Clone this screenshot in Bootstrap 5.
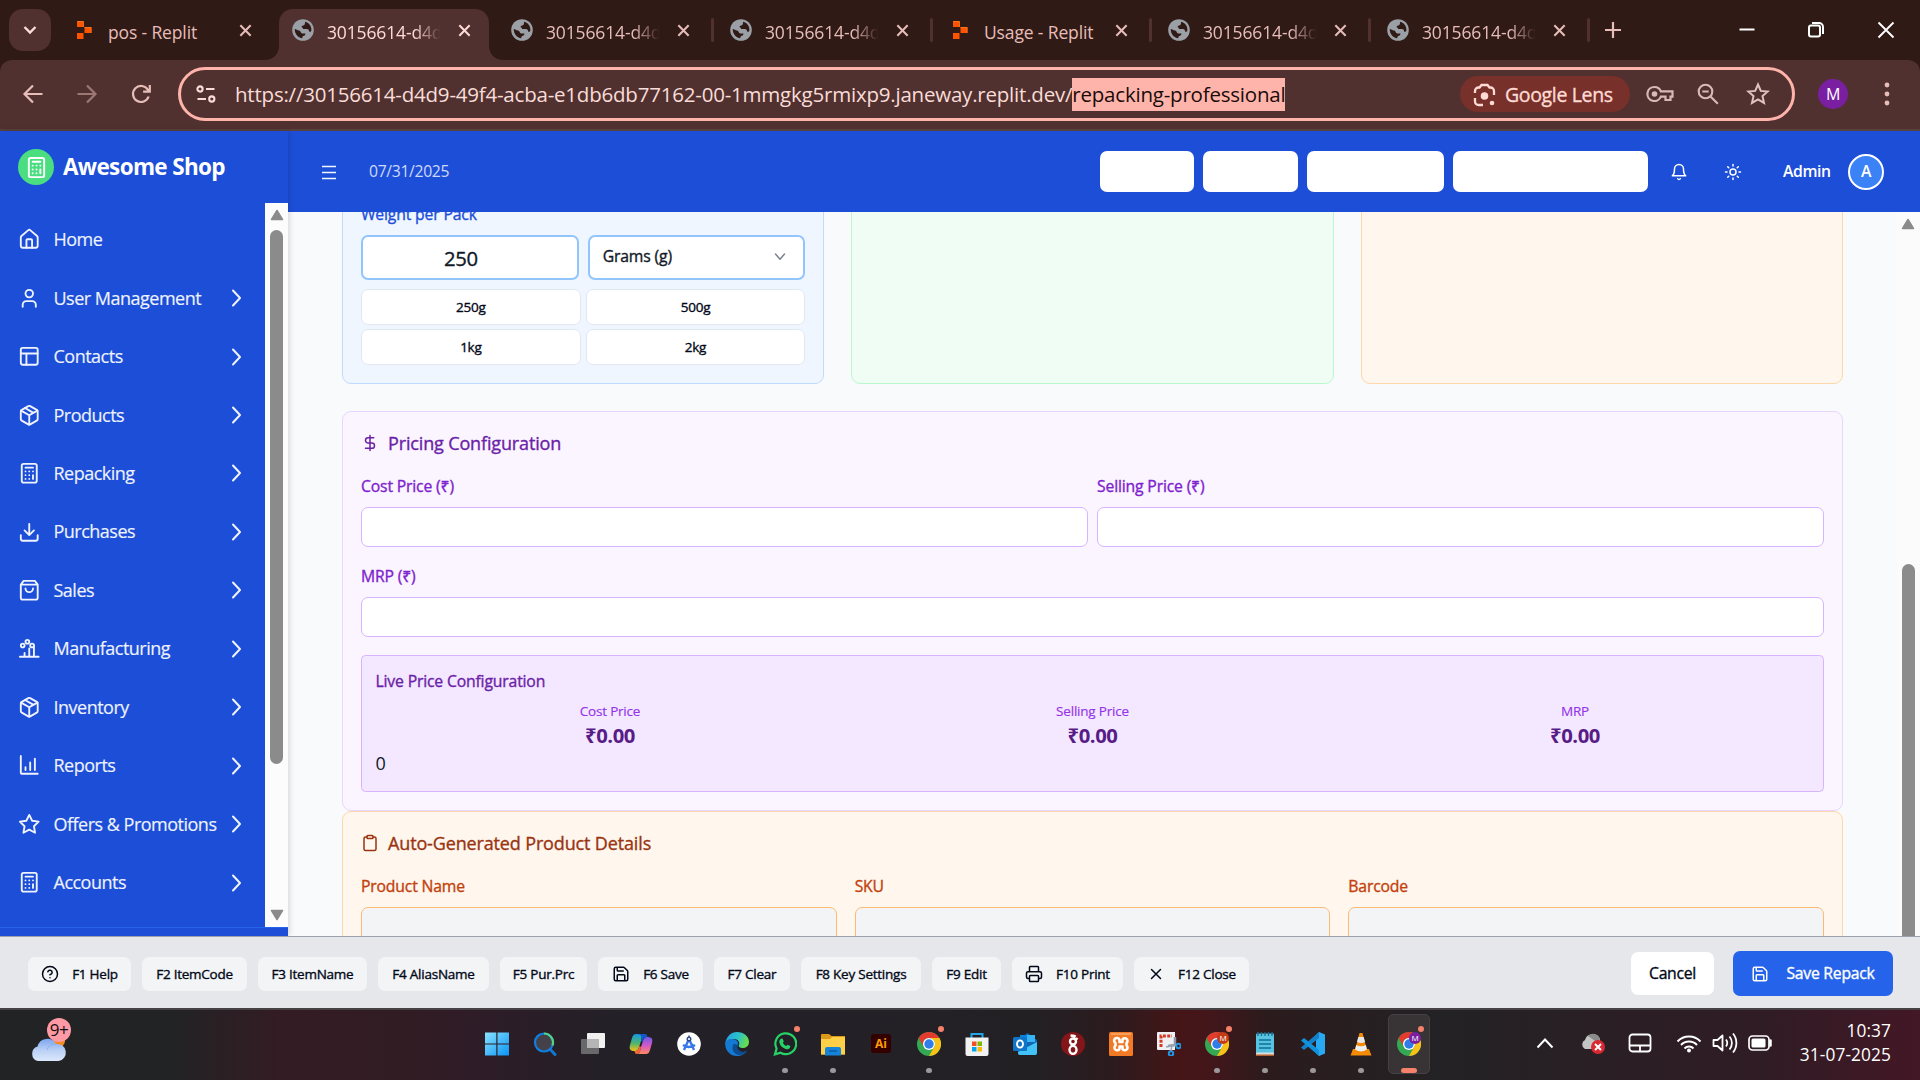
<!DOCTYPE html>
<html lang="en">
<head>
<meta charset="utf-8">
<meta name="viewport" content="width=device-width, initial-scale=1">
<title>Awesome Shop - Repacking</title>
<link rel="stylesheet" href="https://cdn.jsdelivr.net/npm/bootstrap@5.3.0/dist/css/bootstrap.min.css">
<style>
  body{width:1920px;height:1080px;overflow:hidden;font-family:"Open Sans","Noto Sans",sans-serif;font-size:18px;line-height:1.5;letter-spacing:-.02em;color:#111827;background:#f9fafb}
  svg{display:block;flex:none}
  .ln{fill:none;stroke:currentColor;stroke-width:2;stroke-linecap:round;stroke-linejoin:round}
  .fw-md,.lbl,.qbtn,.sect,.fk,.cancel,.saver,.lens{-webkit-text-stroke:.35px currentColor}
  /* browser chrome */
  .tabstrip{height:60px;background:#301a16;padding-left:9px;color:#e7bdb8}
  .tabsearch{width:42px;height:42px;border-radius:14px;background:#50312f;margin:9px 4.5px 0 0;color:#fadcd8}
  .tab-item{width:219px;height:51px;padding:0 0 0 17.5px;margin-top:9px;position:relative;font-size:17.5px}
  .tab-item .fav{width:22px;height:22px;margin-right:13px;margin-bottom:10px}
  .tab-item .ttl{width:121px;white-space:nowrap;margin-bottom:5px;letter-spacing:-.008em}
  .tab-item .fade-end{-webkit-mask-image:linear-gradient(90deg,#000 72%,transparent 94%);mask-image:linear-gradient(90deg,#000 72%,transparent 94%)}
  .tab-item .x{margin:0 0 9px 9px}
  .tab-item.sep::after{content:"";position:absolute;right:-1px;top:9px;width:3px;height:24px;border-radius:2px;background:#50312f}
  .tab-item.on{color:#ffdad5}
  .tab-item.on::before{content:"";position:absolute;z-index:0;left:4.5px;right:4.5px;top:0;bottom:0;background:#50312f;border-radius:14px 14px 0 0}
  .tab-item.on>*{position:relative;z-index:1}
  .tab-item .flare{position:absolute!important;bottom:0;width:13px;height:13px}
  .flare.l{left:-8.5px;background:radial-gradient(circle at 0 0,transparent 12.5px,#50312f 13px)}
  .flare.r{right:-8.5px;background:radial-gradient(circle at 100% 0,transparent 12.5px,#50312f 13px)}
  .newtab{margin-left:15px}
  .winctl{color:#fff;gap:48.5px;padding-right:24.5px}
  .corner{background:#301a16}
  .toolbar{height:71px;background:#50312f;border-bottom:2px solid #5b413e;border-radius:12px 12px 0 0;color:#e7bdb8;padding:7px 25px 0 22px}
  .navs{height:54px;gap:32px}
  .omni{width:1617px;height:54px;border:3px solid #ffb4ab;border-radius:27px;padding:0 22px 0 15px;color:#fadcd8}
  .url{font-size:20.5px;letter-spacing:-.0103em;white-space:nowrap;margin-left:19px;line-height:33px}
  .url .sel{background:#ffb4ab;color:#1a0b09;display:inline-block;height:33px}
  .lens{width:170px;height:36px;border-radius:18px;background:#77302a;color:#ffdad5;font-size:19.5px;letter-spacing:-.018em;padding:1px 0 0 13px;gap:9px}
  .gap-l{margin-left:23px}
  .prof{width:30px;height:30px;border-radius:50%;background:#7b1fa2;color:#fff;font-size:16px}
  .profwrap{height:54px;margin-left:23px}
  .dots{margin:0 5px 0 36px}
  /* application */
  .app{height:805px}
  .side{width:288px;background:#1d4ed8;color:#fff;box-shadow:1px 0 6px rgba(0,0,0,.16);position:relative;z-index:2}
  .brand{height:72px;padding:0 0 0 18px;font-size:22.5px;font-weight:700;letter-spacing:-.029em;gap:9px}
  .brand .logo{width:36px;height:36px;border-radius:50%;background:#4ade80}
  .menu{height:724px}
  .menu ul{width:265px;padding:7.5px 16px 0 18px;color:#eef3fd}
  .menu li{height:58.45px}
  .menu li .tx{width:170px;white-space:nowrap;margin-left:13px;letter-spacing:-.028em;-webkit-text-stroke:.15px currentColor}
  .track{width:23px;background:#fcfcfc;padding:6px 0}
  .thumb{width:13px;background:#8b8b8b}
  .side-thumb{height:534px;margin-top:9px}
  .main-thumb{margin-top:334px;border-radius:7px 7px 0 0}
  .side-foot{height:9px;border-top:1px solid #2563eb}
  .hdr{height:81px;background:#1d4ed8;color:#fff;padding:0 36px 0 33px}
  .hdr .date{font-size:15.75px;color:#cddafb;margin-left:32px;letter-spacing:-.022em}
  .blanks{gap:9px}
  .blank{height:41px;background:#fff;border-radius:7px}
  .blank:nth-child(1){width:94px}.blank:nth-child(2){width:95px}.blank:nth-child(3){width:137px}.blank:nth-child(4){width:195px}
  .bell{margin-left:22px}.sun{margin-left:36px}
  .admin{font-size:15.75px;font-weight:600;margin-left:41px;width:65px;letter-spacing:-.025em}
  .usr{width:36px;height:36px;border-radius:50%;background:#3b82f6;border:2px solid #fff;font-size:15.75px;font-weight:600}
  .content{height:724px;background:#f9fafb;overflow:hidden}
  .pane{width:1609px;padding:0 54px}
  .three{display:grid;grid-template-columns:repeat(3,1fr);gap:27px;height:200px;margin-top:-28px;margin-bottom:27px}
  .panel{border:1px solid;border-radius:9px;padding:0 18px}
  .p-blue{background:#eff6ff;border-color:#bfdbfe}.p-green{background:#f0fdf4;border-color:#bbf7d0}
  .p-org{background:#fff7ed;border-color:#fed7aa}.p-pur{background:#faf5ff;border-color:#e9d5ff}
  .lbl{font-size:15.75px;line-height:22px;letter-spacing:-.011em}
  .p-blue .lbl{color:#1d4ed8;margin-top:18px}
  .p-pur .lbl{color:#7e22ce}.p-org .lbl{color:#c2410c}
  .p-pur .lbl.dark{color:#6b21a8}
  .fld{border:1px solid #d8b4fe;border-radius:7px;background:#fff;height:40px;margin-top:10px}
  .fld-b{height:45px;border:2px solid #93c5fd;border-radius:7px;background:#fff}
  .num-in{font-size:20.25px;line-height:43px;padding-right:18px}
  .unit-in{font-size:15.75px;padding:0 14px 2px 13px;letter-spacing:-.01em}
  .unit-in svg{color:#7b8190}
  .qty{display:grid;grid-template-columns:1fr 1fr;gap:9px;margin-top:10px}
  .qty2{display:grid;grid-template-columns:1fr 1fr;gap:4px 5px;margin-top:9px}
  .qbtn{height:36px;border:1px solid #e2e8f0;border-radius:7px;background:#fff;font-size:13.5px;line-height:35px;padding:0;color:#020817;letter-spacing:-.02em}
  .sect{font-size:18px;line-height:28px;letter-spacing:-.008em;gap:9px;margin-bottom:18px}
  .pricing{height:400px;padding-top:17px}
  .pair{gap:9px}
  .pair>div{flex:1 1 0}
  .mrp{margin-top:18px}
  .live{height:137px;background:#f3e8ff;border:1px solid #d8b4fe;border-radius:4.5px;margin-top:18px;padding:14px 13.5px}
  .live .cap{font-size:13.5px;line-height:18px;color:#9333ea;letter-spacing:-.015em;-webkit-text-stroke:.15px currentColor}
  .live .amt{font-size:20.25px;line-height:30px;font-weight:700;color:#581c87;letter-spacing:-.02em}
  .prices{display:grid;grid-template-columns:repeat(3,1fr);gap:13.5px;margin-top:10px}
  .p-org.auto{height:160px;padding-top:17px}
  .auto3{display:grid;grid-template-columns:repeat(3,1fr);gap:18px}
  .auto .fld{background:#f3f4f6;border-color:#fdba74}
  .track2{width:22px;padding:6px 0 0;background:#fbfbfc}
  .c-pur{color:#6b21a8}.c-org{color:#9a3412}
  /* shortcut bar */
  .fbar{height:72px;background:#e5e7eb;border-top:1px solid #9ca3af;padding:2px 27px 0 28px;position:relative;z-index:3}
  .fkeys{gap:11px}
  .fk{height:34px;border:0;border-radius:7px;background:#f3f4f6;color:#020817;font-size:13.5px;padding:1px 0 0;letter-spacing:-.018em;white-space:nowrap;gap:13px}
  .fk:nth-child(1){width:103px}.fk:nth-child(2){width:105px}.fk:nth-child(3){width:109px}.fk:nth-child(4){width:111px}.fk:nth-child(5){width:87px}.fk:nth-child(6){width:105px}.fk:nth-child(7){width:76px}.fk:nth-child(8){width:120px}.fk:nth-child(9){width:69px}.fk:nth-child(10){width:111px}.fk:nth-child(11){width:115px}
  .cancel{width:83px;height:43px;background:#fff;border-radius:7px;font-size:15.75px;color:#020817;padding:0;margin-right:19px;letter-spacing:-.018em}
  .saver{width:160px;height:45px;background:#2563eb;border-radius:7px;font-size:15.75px;color:#fff;padding:0;gap:17px;letter-spacing:-.016em}
  .cancel:hover,.saver:hover,.fk:hover{opacity:.9}
  /* windows taskbar */
  .task{height:72px;border-top:2px solid #454144;color:#fff;background:linear-gradient(90deg,#222324 0,#222324 9%,#331c24 14.5%,#321c23 21%,#2f1c27 24%,#232028 32%,#232126 48%,#232024 54%,#2c1b1e 58%,#451517 61.5%,#43161a 63%,#2b1b1d 66%,#232224 75%,#2a1f24 84%,#301c24 92%,#431726 100%)}
  .weather{width:80px;padding-left:29px;position:relative}
  .weather svg{margin-top:23px}
  .weather .num{position:absolute;left:47px;top:8px;width:24px;height:24px;border-radius:50%;background:#ff99a4;color:#101010;font-size:17px;line-height:23px;text-align:center;letter-spacing:-.03em}
  .apps{padding-left:393.3px}
  .app-ico{width:48px;height:70px;padding-bottom:2px;position:relative}
  .app-ico.run::after{content:"";position:absolute;left:21px;bottom:7px;width:6px;height:5px;border-radius:3px;background:#9b989a}
  .app-ico.alert-dot::before{content:"";position:absolute;z-index:2;left:33px;top:16px;width:6px;height:6px;border-radius:50%;background:#f4826b}
  .app-ico.cur svg{position:relative;z-index:1}
  .app-ico .hl{position:absolute;left:3px;top:4px;width:42px;height:60px;border-radius:5px;background:#383335;border:1px solid #454043}
  .app-ico.cur::after{left:16px;width:16px;background:#f4826b;z-index:2}
  .tray{padding-right:29px}
  .tray .cloudy{margin-left:26px}.tray .pad{margin-left:22px}.tray .wifi{margin-left:24px}.tray .spk{margin-left:10px}
  .clock{font-size:17.3px;line-height:24px;width:106px;text-align:right;letter-spacing:.006em;margin-left:12px}
</style>
<script src="https://cdn.jsdelivr.net/npm/bootstrap@5.3.0/dist/js/bootstrap.bundle.min.js"></script>
</head>
<body class="d-flex flex-column">
<svg width="0" height="0" class="position-absolute">
  <defs>
    <symbol id="cls" viewBox="0 0 16 16"><path d="M2.500 2.500l11 11M13.500 2.500l-11 11" fill="none" stroke="currentColor" stroke-width="2.200"/></symbol>
    <symbol id="globe" viewBox="0 0 22 22"><circle cx="11" cy="11" r="10.800" fill="#9aa0a6"/><path d="M13.200 2.800c-.6 1.600.3 2.100-1 3.100-1.200.8-2.400.4-2.600 1.700-.2 1.100 1.400 1.100 1.500 2.300h3.700c1.500 0 2.500 1.200 2.300 2.800 1.300.3 2-.2 2.300-1.200.3-4.300-2.300-7.600-6.200-8.700zM2.700 10c0 5 3.200 8.800 7.700 9.300-.4-1.200.3-2.300 1.500-2.600 1-.3 1.500-.8 1.500-2.200h-3c-2 0-1.400-2.600-3.400-2.900C5.200 11.300 4.400 10.200 2.700 10z" fill="#301a16"/></symbol>
    <symbol id="repl" viewBox="0 0 22 22"><path d="M4 2h6.500v6H4zM11.500 8h7v6h-7zM4 14h6.500v6H4z" fill="#fd5402"/><path d="M4.500 2.500h6V8M11.500 8.500h6.500V14" fill="none" stroke="#ff7a1e" stroke-width=".8"/></symbol>
    <symbol id="chev" viewBox="0 0 24 24"><path class="ln" d="M9 4.500l7 7.500-7 7.500"/></symbol>
    <symbol id="home" viewBox="0 0 24 24"><g class="ln"><path d="M3 10a2 2 0 0 1 .7-1.500l7-6a2 2 0 0 1 2.600 0l7 6A2 2 0 0 1 21 10v9a2 2 0 0 1-2 2H5a2 2 0 0 1-2-2z"/><path d="M15 21v-8a1 1 0 0 0-1-1h-4a1 1 0 0 0-1 1v8"/></g></symbol>
    <symbol id="user" viewBox="0 0 24 24"><g class="ln"><path d="M19 21v-2a4 4 0 0 0-4-4H9a4 4 0 0 0-4 4v2"/><circle cx="12" cy="7" r="4"/></g></symbol>
    <symbol id="layout" viewBox="0 0 24 24"><g class="ln"><rect x="3" y="3" width="18" height="18" rx="2"/><path d="M3 9h18M9 21V9"/></g></symbol>
    <symbol id="pkg" viewBox="0 0 24 24"><g class="ln"><path d="M21 8a2 2 0 0 0-1-1.730l-7-4a2 2 0 0 0-2 0l-7 4A2 2 0 0 0 3 8v8a2 2 0 0 0 1 1.730l7 4a2 2 0 0 0 2 0l7-4A2 2 0 0 0 21 16z"/><path d="M3.300 7L12 12l8.700-5M12 22V12M7.500 4.270l9 5.150"/></g></symbol>
    <symbol id="calc" viewBox="0 0 24 24"><g class="ln"><rect x="4" y="2" width="16" height="20" rx="2"/><path d="M8 6h8M16 14v4M16 10h.01M12 10h.01M8 10h.01M12 14h.01M8 14h.01M12 18h.01M8 18h.01"/></g></symbol>
    <symbol id="down" viewBox="0 0 24 24"><path class="ln" d="M21 15v4a2 2 0 0 1-2 2H5a2 2 0 0 1-2-2v-4M7 10l5 5 5-5M12 15V3"/></symbol>
    <symbol id="bag" viewBox="0 0 24 24"><path class="ln" d="M6 2L3 6v14a2 2 0 0 0 2 2h14a2 2 0 0 0 2-2V6l-3-4zM3 6h18M16 10a4 4 0 0 1-8 0"/></symbol>
    <symbol id="manu" viewBox="0 0 24 24"><g class="ln"><circle cx="5" cy="8" r="2"/><circle cx="10" cy="4" r="2"/><circle cx="15" cy="8" r="2"/><path d="M2 20h20M7 20v-4M12 20v-9M17 8.500V20"/></g></symbol>
    <symbol id="chart" viewBox="0 0 24 24"><path class="ln" d="M3 2v18a1 1 0 0 0 1 1h17M8 17v-3M13 17V9M18 17V5"/></symbol>
    <symbol id="star" viewBox="0 0 24 24"><path class="ln" d="M12 2l3.090 6.260L22 9.270l-5 4.870 1.180 6.880L12 17.770l-6.180 3.250L7 14.140 2 9.270l6.910-1.010z"/></symbol>
    <symbol id="save" viewBox="0 0 24 24"><path class="ln" d="M15.200 3a2 2 0 0 1 1.400.6l3.800 3.800a2 2 0 0 1 .6 1.400V19a2 2 0 0 1-2 2H5a2 2 0 0 1-2-2V5a2 2 0 0 1 2-2zM17 21v-7a1 1 0 0 0-1-1H8a1 1 0 0 0-1 1v7M7 3v4a1 1 0 0 0 1 1h7"/></symbol>
    <symbol id="up" viewBox="0 0 14 12"><path d="M7 1.500L12.500 10.500H1.500z" fill="#8b8b8b" stroke="#8b8b8b" stroke-width="1.500" stroke-linejoin="round"/></symbol>
    <symbol id="chrome" viewBox="0 0 24 24"><circle cx="12" cy="12" r="12" fill="#34a853"/><path d="M12 0a12 12 0 0 1 10.400 6H12a6 6 0 0 0-5.200 9L1.600 6A12 12 0 0 1 12 0z" fill="#e33b2e"/><path d="M22.400 6A12 12 0 0 1 12 24l5.200-9A6 6 0 0 0 17.200 9 6 6 0 0 0 12 6z" fill="#fbc116"/><circle cx="12" cy="12" r="6" fill="#fff"/><circle cx="12" cy="12" r="4.700" fill="#2f7de9"/></symbol>
  </defs>
</svg>

<div class="tabstrip d-flex">
  <div class="tabsearch d-flex align-items-center justify-content-center"><svg width="14" height="10" viewBox="0 0 14 10"><path d="M1.500 2l5.500 5.500L12.500 2" fill="none" stroke="currentColor" stroke-width="2.400"/></svg></div>
  <div class="tab-item d-flex align-items-center"><svg class="fav"><use href="#repl"/></svg><span class="ttl">pos - Replit</span><svg class="x" width="15" height="15"><use href="#cls"/></svg></div>
  <div class="tab-item on d-flex align-items-center"><i class="flare l"></i><i class="flare r"></i><svg class="fav"><use href="#globe"/></svg><span class="ttl fade-end">30156614-d4d</span><svg class="x" width="15" height="15"><use href="#cls"/></svg></div>
  <div class="tab-item sep d-flex align-items-center"><svg class="fav"><use href="#globe"/></svg><span class="ttl fade-end">30156614-d4d</span><svg class="x" width="15" height="15"><use href="#cls"/></svg></div>
  <div class="tab-item sep d-flex align-items-center"><svg class="fav"><use href="#globe"/></svg><span class="ttl fade-end">30156614-d4d</span><svg class="x" width="15" height="15"><use href="#cls"/></svg></div>
  <div class="tab-item sep d-flex align-items-center"><svg class="fav"><use href="#repl"/></svg><span class="ttl">Usage - Replit</span><svg class="x" width="15" height="15"><use href="#cls"/></svg></div>
  <div class="tab-item sep d-flex align-items-center"><svg class="fav"><use href="#globe"/></svg><span class="ttl fade-end">30156614-d4d</span><svg class="x" width="15" height="15"><use href="#cls"/></svg></div>
  <div class="tab-item sep d-flex align-items-center"><svg class="fav"><use href="#globe"/></svg><span class="ttl fade-end">30156614-d4d</span><svg class="x" width="15" height="15"><use href="#cls"/></svg></div>
  <svg class="newtab align-self-center" width="18" height="18" viewBox="0 0 18 18"><path d="M9 1v16M1 9h16" stroke="currentColor" stroke-width="2.200"/></svg>
  <div class="winctl d-flex align-items-center ms-auto">
    <svg width="20" height="20" viewBox="0 0 20 20"><path d="M2.500 9.500h15" stroke="currentColor" stroke-width="2"/></svg>
    <svg width="22" height="20" viewBox="0 0 22 20"><g fill="none" stroke="currentColor" stroke-width="2"><rect x="4" y="5.500" width="11" height="11" rx="2"/><path d="M7 3h7a4 4 0 0 1 4 4v7"/></g></svg>
    <svg width="20" height="20" viewBox="0 0 20 20"><path d="M2.500 2.500l15 15M17.500 2.500l-15 15" stroke="currentColor" stroke-width="1.900"/></svg>
  </div>
</div>
<div class="corner">
<div class="toolbar d-flex align-items-start">
  <div class="navs d-flex align-items-center">
    <svg width="22" height="20" viewBox="0 0 22 20"><path d="M20.500 10H3M11 1.500L2.500 10l8.500 8.500" fill="none" stroke="currentColor" stroke-width="2.200"/></svg>
    <svg class="opacity-50" width="22" height="20" viewBox="0 0 22 20"><path d="M1.500 10H19M11 1.500l8.500 8.500-8.500 8.500" fill="none" stroke="currentColor" stroke-width="2.200"/></svg>
    <svg width="22" height="22" viewBox="0 0 22 22"><path d="M18.600 13.500a8 8 0 1 1-.8-6.800L19.500 8.500M19.800 2v6.700h-6.700" fill="none" stroke="currentColor" stroke-width="2.200"/></svg>
  </div>
  <div class="omni d-flex align-items-center ms-auto">
    <svg width="20" height="20" viewBox="0 0 20 20"><g fill="none" stroke="currentColor" stroke-width="2.100"><circle cx="4" cy="5" r="2.600"/><path d="M10 5h8.500M1.500 15H10"/><circle cx="15.800" cy="15" r="2.600"/></g></svg>
    <div class="url">https://30156614-d4d9-49f4-acba-e1db6db77162-00-1mmgkg5rmixp9.janeway.replit.dev/<span class="sel">repacking-professional</span></div>
    <div class="lens d-flex align-items-center ms-auto">
      <svg width="23" height="24" viewBox="0 0 23 24"><g fill="none" stroke="currentColor" stroke-width="2.300"><path d="M2 10V8a3.500 3.500 0 0 1 3.500-3.500h1L8.500 2h6l2 2.500h1A3.500 3.500 0 0 1 21 8v4M2 15v3.500A3.500 3.500 0 0 0 5.500 22H10"/></g><circle cx="11.500" cy="13" r="3.800" fill="currentColor"/><circle cx="19" cy="20" r="2.300" fill="currentColor"/></svg>
      <span>Google Lens</span></div>
    <svg class="ms-3" width="28" height="20" viewBox="0 0 28 20"><g fill="none" stroke="currentColor" stroke-width="2.200" opacity=".8"><path d="M8.500 3a7 7 0 1 0 6.400 9.700h4.600V16h5v-3.300h2V7.300H14.900A7 7 0 0 0 8.500 3z"/></g><circle cx="8.500" cy="10" r="2.800" fill="currentColor" opacity=".8"/></svg>
    <svg class="gap-l" width="22" height="22" viewBox="0 0 22 22"><g fill="none" stroke="currentColor" stroke-width="2.100" opacity=".8"><circle cx="8.500" cy="8.500" r="6.800"/><path d="M13.500 13.500l7.300 7.300M5.300 8.500h6.400"/></g></svg>
    <svg class="gap-l ps-1" width="28" height="24" viewBox="0 0 24 24"><path d="M12 2.500l2.800 6.400 6.900.6-5.200 4.600 1.500 6.800-6-3.600-6 3.600 1.500-6.800-5.200-4.600 6.900-.6z" fill="none" stroke="currentColor" stroke-width="2" opacity=".85"/></svg>
  </div>
  <div class="profwrap d-flex align-items-center">
    <div class="prof d-flex align-items-center justify-content-center">M</div>
    <svg class="dots" width="6" height="24" viewBox="0 0 6 24"><g fill="currentColor"><circle cx="3" cy="3" r="2.400"/><circle cx="3" cy="12" r="2.400"/><circle cx="3" cy="21" r="2.400"/></g></svg>
  </div>
</div>
</div>

<div class="app d-flex">
  <aside class="side d-flex flex-column">
    <div class="brand d-flex align-items-center"><div class="logo d-flex align-items-center justify-content-center"><svg width="23" height="23"><use href="#calc"/></svg></div><span>Awesome Shop</span></div>
    <nav class="menu d-flex">
      <ul class="list-unstyled m-0">
        <li class="d-flex align-items-center"><svg width="22.500" height="22.500"><use href="#home"/></svg><span class="tx">Home</span></li>
        <li class="d-flex align-items-center"><svg width="22.500" height="22.500"><use href="#user"/></svg><span class="tx">User Management</span><svg width="24" height="24"><use href="#chev"/></svg></li>
        <li class="d-flex align-items-center"><svg width="22.500" height="22.500"><use href="#layout"/></svg><span class="tx">Contacts</span><svg width="24" height="24"><use href="#chev"/></svg></li>
        <li class="d-flex align-items-center"><svg width="22.500" height="22.500"><use href="#pkg"/></svg><span class="tx">Products</span><svg width="24" height="24"><use href="#chev"/></svg></li>
        <li class="d-flex align-items-center"><svg width="22.500" height="22.500"><use href="#calc"/></svg><span class="tx">Repacking</span><svg width="24" height="24"><use href="#chev"/></svg></li>
        <li class="d-flex align-items-center"><svg width="22.500" height="22.500"><use href="#down"/></svg><span class="tx">Purchases</span><svg width="24" height="24"><use href="#chev"/></svg></li>
        <li class="d-flex align-items-center"><svg width="22.500" height="22.500"><use href="#bag"/></svg><span class="tx">Sales</span><svg width="24" height="24"><use href="#chev"/></svg></li>
        <li class="d-flex align-items-center"><svg width="22.500" height="22.500"><use href="#manu"/></svg><span class="tx">Manufacturing</span><svg width="24" height="24"><use href="#chev"/></svg></li>
        <li class="d-flex align-items-center"><svg width="22.500" height="22.500"><use href="#pkg"/></svg><span class="tx">Inventory</span><svg width="24" height="24"><use href="#chev"/></svg></li>
        <li class="d-flex align-items-center"><svg width="22.500" height="22.500"><use href="#chart"/></svg><span class="tx">Reports</span><svg width="24" height="24"><use href="#chev"/></svg></li>
        <li class="d-flex align-items-center"><svg width="22.500" height="22.500"><use href="#star"/></svg><span class="tx">Offers &amp; Promotions</span><svg width="24" height="24"><use href="#chev"/></svg></li>
        <li class="d-flex align-items-center"><svg width="22.500" height="22.500"><use href="#calc"/></svg><span class="tx">Accounts</span><svg width="24" height="24"><use href="#chev"/></svg></li>
      </ul>
      <div class="track d-flex flex-column align-items-center"><svg width="14" height="12"><use href="#up"/></svg><div class="thumb side-thumb rounded-pill"></div><svg class="mt-auto" width="14" height="12" viewBox="0 0 14 12"><path d="M7 10.500L12.500 1.500H1.500z" fill="#8b8b8b" stroke="#8b8b8b" stroke-width="1.500" stroke-linejoin="round"/></svg></div>
    </nav>
    <div class="side-foot"></div>
  </aside>

  <main class="flex-grow-1">
    <header class="hdr d-flex align-items-center">
      <svg width="16" height="16" viewBox="0 0 16 16"><path d="M1 2.500h14M1 8.500h14M1 14.500h14" stroke="#f1f5fe" stroke-width="1.500"/></svg>
      <span class="date">07/31/2025</span>
      <div class="blanks d-flex ms-auto"><div class="blank"></div><div class="blank"></div><div class="blank"></div><div class="blank"></div></div>
      <svg class="bell" width="18" height="20" viewBox="0 0 24 24"><path class="ln" d="M6 8a6 6 0 0 1 12 0c0 7 3 9 3 9H3s3-2 3-9M10.300 21a1.940 1.940 0 0 0 3.400 0"/></svg>
      <svg class="sun" width="18" height="18" viewBox="0 0 24 24"><g class="ln"><circle cx="12" cy="12" r="4"/><path d="M12 2v2M12 20v2M4.930 4.930l1.410 1.410M17.660 17.660l1.410 1.410M2 12h2M20 12h2M6.340 17.660l-1.410 1.410M19.070 4.930l-1.410 1.410"/></g></svg>
      <span class="admin">Admin</span>
      <div class="usr d-flex align-items-center justify-content-center">A</div>
    </header>
    <div class="content d-flex">
      <div class="pane">
        <div class="three">
          <section class="panel p-blue">
            <div class="lbl">Weight per Pack</div>
            <div class="qty">
              <div class="fld-b num-in text-center fw-md">250</div>
              <div class="fld-b unit-in d-flex align-items-center justify-content-between fw-md"><span>Grams (g)</span><svg width="18" height="18" viewBox="0 0 24 24"><path class="ln" d="M6 8l6 7 6-7"/></svg></div>
            </div>
            <div class="qty2"><button class="btn qbtn">250g</button><button class="btn qbtn">500g</button><button class="btn qbtn">1kg</button><button class="btn qbtn">2kg</button></div>
          </section>
          <section class="panel p-green"></section>
          <section class="panel p-org"></section>
        </div>
        <section class="panel p-pur pricing">
          <div class="sect c-pur d-flex align-items-center"><svg width="18" height="18" viewBox="0 0 24 24"><path class="ln" d="M12 2v20M17 5H9.500a3.500 3.500 0 0 0 0 7h5a3.500 3.500 0 0 1 0 7H6"/></svg>Pricing Configuration</div>
          <div class="pair d-flex">
            <div><div class="lbl">Cost Price (₹)</div><div class="fld"></div></div>
            <div><div class="lbl">Selling Price (₹)</div><div class="fld"></div></div>
          </div>
          <div class="lbl mrp">MRP (₹)</div>
          <div class="fld"></div>
          <div class="live">
            <div class="lbl dark">Live Price Configuration</div>
            <div class="prices text-center">
              <div><div class="cap">Cost Price</div><div class="amt">₹0.00</div></div>
              <div><div class="cap">Selling Price</div><div class="amt">₹0.00</div></div>
              <div><div class="cap">MRP</div><div class="amt">₹0.00</div></div>
            </div>
            <div>0</div>
          </div>
        </section>
        <section class="panel p-org auto">
          <div class="sect c-org d-flex align-items-center"><svg width="18" height="18" viewBox="0 0 24 24"><g class="ln"><rect x="8" y="2" width="8" height="4" rx="1"/><path d="M16 4h2a2 2 0 0 1 2 2v14a2 2 0 0 1-2 2H6a2 2 0 0 1-2-2V6a2 2 0 0 1 2-2h2"/></g></svg>Auto-Generated Product Details</div>
          <div class="auto3">
            <div><div class="lbl">Product Name</div><div class="fld"></div></div>
            <div><div class="lbl">SKU</div><div class="fld"></div></div>
            <div><div class="lbl">Barcode</div><div class="fld"></div></div>
          </div>
        </section>
      </div>
      <div class="track2 d-flex flex-column align-items-center"><svg width="14" height="12"><use href="#up"/></svg><div class="thumb main-thumb flex-grow-1"></div></div>
    </div>
  </main>
</div>

<footer class="fbar d-flex align-items-center">
  <div class="fkeys d-flex">
    <button class="btn fk d-flex align-items-center justify-content-center"><svg width="18" height="18" viewBox="0 0 24 24"><g class="ln"><circle cx="12" cy="12" r="10"/><path d="M9.090 9a3 3 0 0 1 5.830 1c0 2-3 3-3 3M12 17h.01"/></g></svg>F1 Help</button>
    <button class="btn fk">F2 ItemCode</button><button class="btn fk">F3 ItemName</button><button class="btn fk">F4 AliasName</button><button class="btn fk">F5 Pur.Prc</button>
    <button class="btn fk d-flex align-items-center justify-content-center"><svg width="18" height="18"><use href="#save"/></svg>F6 Save</button>
    <button class="btn fk">F7 Clear</button><button class="btn fk">F8 Key Settings</button><button class="btn fk">F9 Edit</button>
    <button class="btn fk d-flex align-items-center justify-content-center"><svg width="18" height="18" viewBox="0 0 24 24"><path class="ln" d="M6 18H4a2 2 0 0 1-2-2v-5a2 2 0 0 1 2-2h16a2 2 0 0 1 2 2v5a2 2 0 0 1-2 2h-2M6 9V3a1 1 0 0 1 1-1h10a1 1 0 0 1 1 1v6M7 14h10a1 1 0 0 1 1 1v6a1 1 0 0 1-1 1H7a1 1 0 0 1-1-1v-6a1 1 0 0 1 1-1z"/></svg>F10 Print</button>
    <button class="btn fk d-flex align-items-center justify-content-center"><svg width="18" height="18" viewBox="0 0 24 24"><path class="ln" d="M18 6L6 18M6 6l12 12"/></svg>F12 Close</button>
  </div>
  <button class="btn cancel ms-auto">Cancel</button>
  <button class="btn saver d-flex align-items-center justify-content-center"><svg width="18" height="18"><use href="#save"/></svg>Save Repack</button>
</footer>

<div class="task d-flex">
  <div class="weather">
    <svg width="40" height="30" viewBox="0 0 40 30"><defs><linearGradient id="cl" x1="0" y1="0" x2="0" y2="1"><stop offset="0" stop-color="#7ba6ee"/><stop offset=".5" stop-color="#b9cff5"/><stop offset="1" stop-color="#dbe8fb"/></linearGradient></defs><circle cx="30" cy="8" r="6" fill="#f58a1f"/><path d="M9 28a7.500 7.500 0 0 1-.5-14.500A10 10 0 0 1 27 11a8.500 8.500 0 0 1 2.500 17z" fill="url(#cl)"/><path d="M18 17a8 8 0 0 1 9-6" stroke="#8dafea" fill="none"/></svg>
    <div class="num">9+</div>
  </div>
  <div class="apps d-flex">
    <div class="app-ico d-flex align-items-center justify-content-center"><svg width="24" height="24" viewBox="0 0 24 24"><defs><linearGradient id="w" x1="0" y1="0" x2="1" y2="1"><stop offset="0" stop-color="#8ae3ff"/><stop offset="1" stop-color="#0a93f5"/></linearGradient></defs><path d="M0 .5h11.300v11H0zM12.500.5H24v11H12.500zM0 12.500h11.300v11H0zM12.500 12.500H24v11H12.500z" fill="url(#w)"/></svg></div>
    <div class="app-ico d-flex align-items-center justify-content-center"><svg width="24" height="24" viewBox="0 0 24 24"><path d="M16 16l6 6.500" stroke="#0f78d4" stroke-width="3" stroke-linecap="round"/><circle cx="11" cy="10.500" r="9" fill="#45414b" stroke="#0f7fe0" stroke-width="2.200"/><path d="M11 1.500a9 9 0 0 1 8.500 12" fill="none" stroke="#55d47b" stroke-width="2.200"/></svg></div>
    <div class="app-ico d-flex align-items-center justify-content-center"><svg width="26" height="24" viewBox="0 0 26 24"><rect x="7" y="1" width="18" height="15" rx="1" fill="#f1f1f1"/><rect x="1" y="7" width="18" height="15" rx="1" fill="#767676" opacity=".85"/><path d="M7 7h12v9H7z" fill="#b5b5b5"/></svg></div>
    <div class="app-ico d-flex align-items-center justify-content-center"><svg width="24" height="24" viewBox="0 0 24 24"><defs><linearGradient id="ca" x1="0" y1="0" x2="0" y2="1"><stop offset="0" stop-color="#139be6"/><stop offset=".55" stop-color="#4fb56b"/><stop offset="1" stop-color="#f5c21a"/></linearGradient><linearGradient id="cb" x1="0" y1="0" x2="0" y2="1"><stop offset="0" stop-color="#6d5be8"/><stop offset=".5" stop-color="#d457c8"/><stop offset="1" stop-color="#ff8a5e"/></linearGradient></defs><path d="M7 2h9c-3 0-3 3-4 7l-2 6c-1 3-2 4-4 4-5 0-6-2-5-6l2-7c1-3 2-4 4-4z" fill="url(#ca)"/><path d="M17 22H8c3 0 3-3 4-7l2-6c1-3 2-4 4-4 5 0 6 2 5 6l-2 7c-1 3-2 4-4 4z" fill="url(#cb)"/><path d="M7 2h9c1.500 0 2 1 2.500 3C15 5 14.500 7 13.500 10L12 9c1-4 1-7-5-7z" fill="#1557c8"/><path d="M8 22c-2 0-2-1-2.500-3C9 19 9.500 17 10.500 14l1.500 1c-1 4-1 7-4 7z" fill="#f36a38"/></svg></div>
    <div class="app-ico d-flex align-items-center justify-content-center"><svg width="24" height="24" viewBox="0 0 24 24"><circle cx="12" cy="12" r="11.800" fill="#fff"/><path d="M13.500 10l4.500 4-3 1z" fill="#35b24a"/><g fill="none" stroke="#3978e8" stroke-width="2.400"><path d="M7 18l4.500-10h1L17 18M6 13q6 4 12 0"/></g><circle cx="12" cy="7" r="1.800" fill="#fff" stroke="#2f4c85" stroke-width="1.400"/><path d="M12 3.500v2" stroke="#2f4c85" stroke-width="1.500"/></svg></div>
    <div class="app-ico d-flex align-items-center justify-content-center"><svg width="24" height="24" viewBox="0 0 24 24"><defs><linearGradient id="ed" x1="0" y1="0" x2="1" y2=".3"><stop offset="0" stop-color="#249ce8"/><stop offset=".6" stop-color="#2bc3c9"/><stop offset="1" stop-color="#66db4e"/></linearGradient></defs><path d="M.3 12C1 4.500 6 0 12 0c7 0 12 4.500 12 10 0 3.500-2.500 6-6 6-3 0-5-1-4-3 1-3-1-6-5-6-5 0-8 3-8.700 5z" fill="url(#ed)"/><path d="M.2 11C1 8 4 6.500 7.500 7c4 .5 6.500 3 5.500 6-1 1-2 2 0 5s7 2.500 9 .8C19 23 15.500 24 12 24 5 24-.3 18 .2 11z" fill="#1479d2"/><path d="M8.500 12c-3 5 1 11 6 11 3 0 6-2 7.500-4.300-2 1.500-6 1.500-8.500-1-1.500-1.500-1.500-3-.5-5.200z" fill="#0e4c91"/></svg></div>
    <div class="app-ico run alert-dot d-flex align-items-center justify-content-center"><svg width="24" height="24" viewBox="0 0 24 24"><path d="M2 22.300l1.600-5.700A10.400 10.400 0 1 1 7.500 20.700z" fill="none" stroke="#25d366" stroke-width="2.200"/><path d="M8.200 6.500l1.500.2 1.100 2.700-1 1.400c.8 1.600 1.900 2.600 3.500 3.300l1.300-1.400 2.700 1.300c.2 1.800-1.200 3.200-3.100 3.200-4.500-.5-7.300-3.800-7.900-7.200-.1-1.500.7-2.800 1.900-3.500z" fill="#25d366"/></svg></div>
    <div class="app-ico run d-flex align-items-center justify-content-center"><svg width="24" height="24" viewBox="0 0 24 24"><path d="M0 3a1 1 0 0 1 1-1h7l2.500 2H24v18.500H0z" fill="#dd9a18"/><path d="M0 7h9l2-2h12a1 1 0 0 1 1 1v16.500H0z" fill="#ffcf48"/><path d="M4 23.500V17a2 2 0 0 1 2-2h12a2 2 0 0 1 2 2v6.500z" fill="#1583d8"/><path d="M8 19h8" stroke="#0a5ba6" stroke-width="1.500"/></svg></div>
    <div class="app-ico d-flex align-items-center justify-content-center"><svg width="22" height="22" viewBox="0 0 22 22"><rect x="1" y="1" width="20" height="19" rx="3" fill="#330000"/><text x="11" y="15" text-anchor="middle" font-size="12" font-weight="700" fill="#ff9a00" letter-spacing="0">Ai</text></svg></div>
    <div class="app-ico run alert-dot d-flex align-items-center justify-content-center"><svg width="24" height="24"><use href="#chrome"/></svg></div>
    <div class="app-ico d-flex align-items-center justify-content-center"><svg width="24" height="24" viewBox="0 0 24 24"><path d="M6.500 6V2h11v4" fill="none" stroke="#1fa7ea" stroke-width="2"/><path d="M.5 5.500h23V22a2 2 0 0 1-2 2h-19a2 2 0 0 1-2-2z" fill="#f1f1f1"/><path d="M7 9.500h4.500V14H7z" fill="#f25022"/><path d="M12.500 9.500H17V14h-4.500z" fill="#7fba00"/><path d="M7 15h4.500v4.500H7z" fill="#00a4ef"/><path d="M12.500 15H17v4.500h-4.500z" fill="#ffb900"/></svg></div>
    <div class="app-ico d-flex align-items-center justify-content-center"><svg width="24" height="24" viewBox="0 0 24 24"><path d="M5 8L14.500 1 24 8v13a2 2 0 0 1-2 2H7a2 2 0 0 1-2-2z" fill="#1066b5"/><path d="M7 3h7v7H7z" fill="#0a83dc"/><path d="M14 3h8v7h-8z" fill="#36b4f3"/><path d="M5 20l19-10v11a2 2 0 0 1-2 2H7a2 2 0 0 1-2-2z" fill="#43c2f5"/><rect y="5" width="14" height="14" rx="1.500" fill="#1075c9"/><ellipse cx="7" cy="12" rx="3" ry="3.600" fill="none" stroke="#fff" stroke-width="1.900"/></svg></div>
    <div class="app-ico d-flex align-items-center justify-content-center"><svg width="24" height="24" viewBox="0 0 24 24"><circle cx="12" cy="12" r="12" fill="#841519"/><g fill="none" stroke="#fff" stroke-width="2.400"><circle cx="12" cy="9.500" r="3"/><ellipse cx="12" cy="17.800" rx="3.500" ry="4"/><path d="M13 6l1-3M9.500 3.500l4 .5M14.500 8l2-2"/></g></svg></div>
    <div class="app-ico d-flex align-items-center justify-content-center"><svg width="24" height="24" viewBox="0 0 24 24"><rect width="24" height="24" rx="1.500" fill="#f27a25"/><path d="M2 2h20" stroke="#f7ae73" stroke-width="1.500"/><path d="M8 6a2.700 2.700 0 0 0-1.500 5v2.500A2.700 2.700 0 1 0 10.500 17v-2.500h3V17a2.700 2.700 0 1 0 4-3.500V11a2.700 2.700 0 1 0-4-3.500V10h-3V7.500A2.700 2.700 0 0 0 8 6z" fill="none" stroke="#fff" stroke-width="2.600" stroke-linejoin="round"/></svg></div>
    <div class="app-ico d-flex align-items-center justify-content-center"><svg width="24" height="24" viewBox="0 0 24 24"><path d="M0 1a1 1 0 0 1 1-1h17v18H1a1 1 0 0 1-1-1z" fill="#eef0f4"/><path d="M4 15V4h11" fill="none" stroke="#d63a25" stroke-width="3" stroke-dasharray="3 1.300"/><path d="M18 5v8l-7 1" stroke="#8c97a8" stroke-width="2.500" fill="none"/><circle cx="21.500" cy="14" r="2.200" fill="none" stroke="#2196e3" stroke-width="2"/><circle cx="14" cy="21.500" r="2.200" fill="none" stroke="#2196e3" stroke-width="2"/><path d="M9 15l10-2M14 19l1-7" stroke="#9aa4b2" stroke-width="1.500"/></svg></div>
    <div class="app-ico run alert-dot d-flex align-items-center justify-content-center"><svg width="24" height="24" viewBox="0 0 24 24"><use href="#chrome"/><circle cx="18" cy="6" r="6" fill="#c43b15"/><text x="18" y="8.800" text-anchor="middle" font-size="8" fill="#fff" letter-spacing="0">M</text></svg></div>
    <div class="app-ico run d-flex align-items-center justify-content-center"><svg width="20" height="24" viewBox="0 0 20 24"><rect x="1" y="1.500" width="18" height="19.500" rx="1" fill="#58c3e0"/><path d="M1 20.500h18V24H1z" fill="#d9dde0"/><path d="M1 22.500h18V24H1z" fill="#b4602c"/><path d="M3 0v4M6.500 0v4M10 0v4M13.500 0v4M17 0v4" stroke="#176f92" stroke-width="1.300"/><path d="M4 8h12M4 12h12M4 16h12" stroke="#0d6f98" stroke-width="1.600"/></svg></div>
    <div class="app-ico run d-flex align-items-center justify-content-center"><svg width="24" height="24" viewBox="0 0 24 24"><path d="M18 0L24 2.500v19L18 24l-3-3V3z" fill="#29a9f2"/><path d="M18 0v6L3 18 0 15.500z" fill="#1580c9"/><path d="M18 24v-6L3 6 0 8.500z" fill="#1192dc"/></svg></div>
    <div class="app-ico run d-flex align-items-center justify-content-center"><svg width="22" height="24" viewBox="0 0 22 24"><path d="M3 17h16l2.500 6.500H.5z" fill="#f58a07"/><path d="M9.500 1h3L17 18q-6 4-12 0z" fill="#f58807"/><path d="M8.300 5h5.400l1.300 5q-4 2-8 0z" fill="#e8e8e8"/><path d="M6.200 13q5 2.500 9.700 0l1.100 4.500q-6 4-12 0z" fill="#eceef0"/></svg></div>
    <div class="app-ico run cur alert-dot d-flex align-items-center justify-content-center"><div class="hl"></div><svg width="24" height="24" viewBox="0 0 24 24"><use href="#chrome"/><circle cx="18" cy="6" r="6" fill="#7b1fa2"/><text x="18" y="8.800" text-anchor="middle" font-size="8" fill="#fff" letter-spacing="0">M</text></svg></div>
  </div>
  <div class="tray d-flex align-items-center ms-auto pb-1">
    <svg width="18" height="12" viewBox="0 0 18 12"><path d="M1.500 10.500L9 2.500l7.500 8" fill="none" stroke="#fff" stroke-width="2"/></svg>
    <svg class="cloudy" width="26" height="24" viewBox="0 0 26 24"><path d="M5 18a5 5 0 0 1 0-9 8 8 0 0 1 15-1v10z" fill="#c4c4c4"/><path d="M8 5a7 7 0 0 1 12 3l-2 4z" fill="#8b8b8b"/><circle cx="18" cy="16" r="7" fill="#d92832"/><path d="M15 13l6 6M21 13l-6 6" stroke="#fff" stroke-width="2"/></svg>
    <svg class="pad" width="24" height="20" viewBox="0 0 24 20"><g fill="none" stroke="#fff" stroke-width="1.800"><rect x="1.500" y="1.500" width="21" height="17" rx="3"/><path d="M1.500 12.500h21M12 12.500v6"/></g></svg>
    <svg class="wifi" width="26" height="20" viewBox="0 0 26 20"><g fill="none" stroke="#fff" stroke-width="2"><path d="M1.500 8.500a16 16 0 0 1 23 0M5 12a11 11 0 0 1 16 0M8.500 15.500a6.300 6.300 0 0 1 9 0"/></g><circle cx="13" cy="17.500" r="2" fill="#fff"/></svg>
    <svg class="spk" width="26" height="22" viewBox="0 0 26 22"><g fill="none" stroke="#fff" stroke-width="1.800" stroke-linejoin="round"><path d="M1.500 8v6h4l5 4.500v-15L5.500 8zM14 7.500a6 6 0 0 1 0 7M17.500 4.500a10 10 0 0 1 0 13M21 1.500a15 15 0 0 1 0 19"/></g></svg>
    <svg class="spk" width="25" height="18" viewBox="0 0 25 18"><rect x="1" y="2" width="20" height="14" rx="3.500" fill="none" stroke="#fff" stroke-width="1.700"/><rect x="3.500" y="4.500" width="14" height="9" rx="1.500" fill="#fff"/><path d="M22.500 6.500v5" stroke="#fff" stroke-width="2.500" stroke-linecap="round"/></svg>
    <div class="clock">10:37<br>31-07-2025</div>
  </div>
</div>
</body>
</html>
